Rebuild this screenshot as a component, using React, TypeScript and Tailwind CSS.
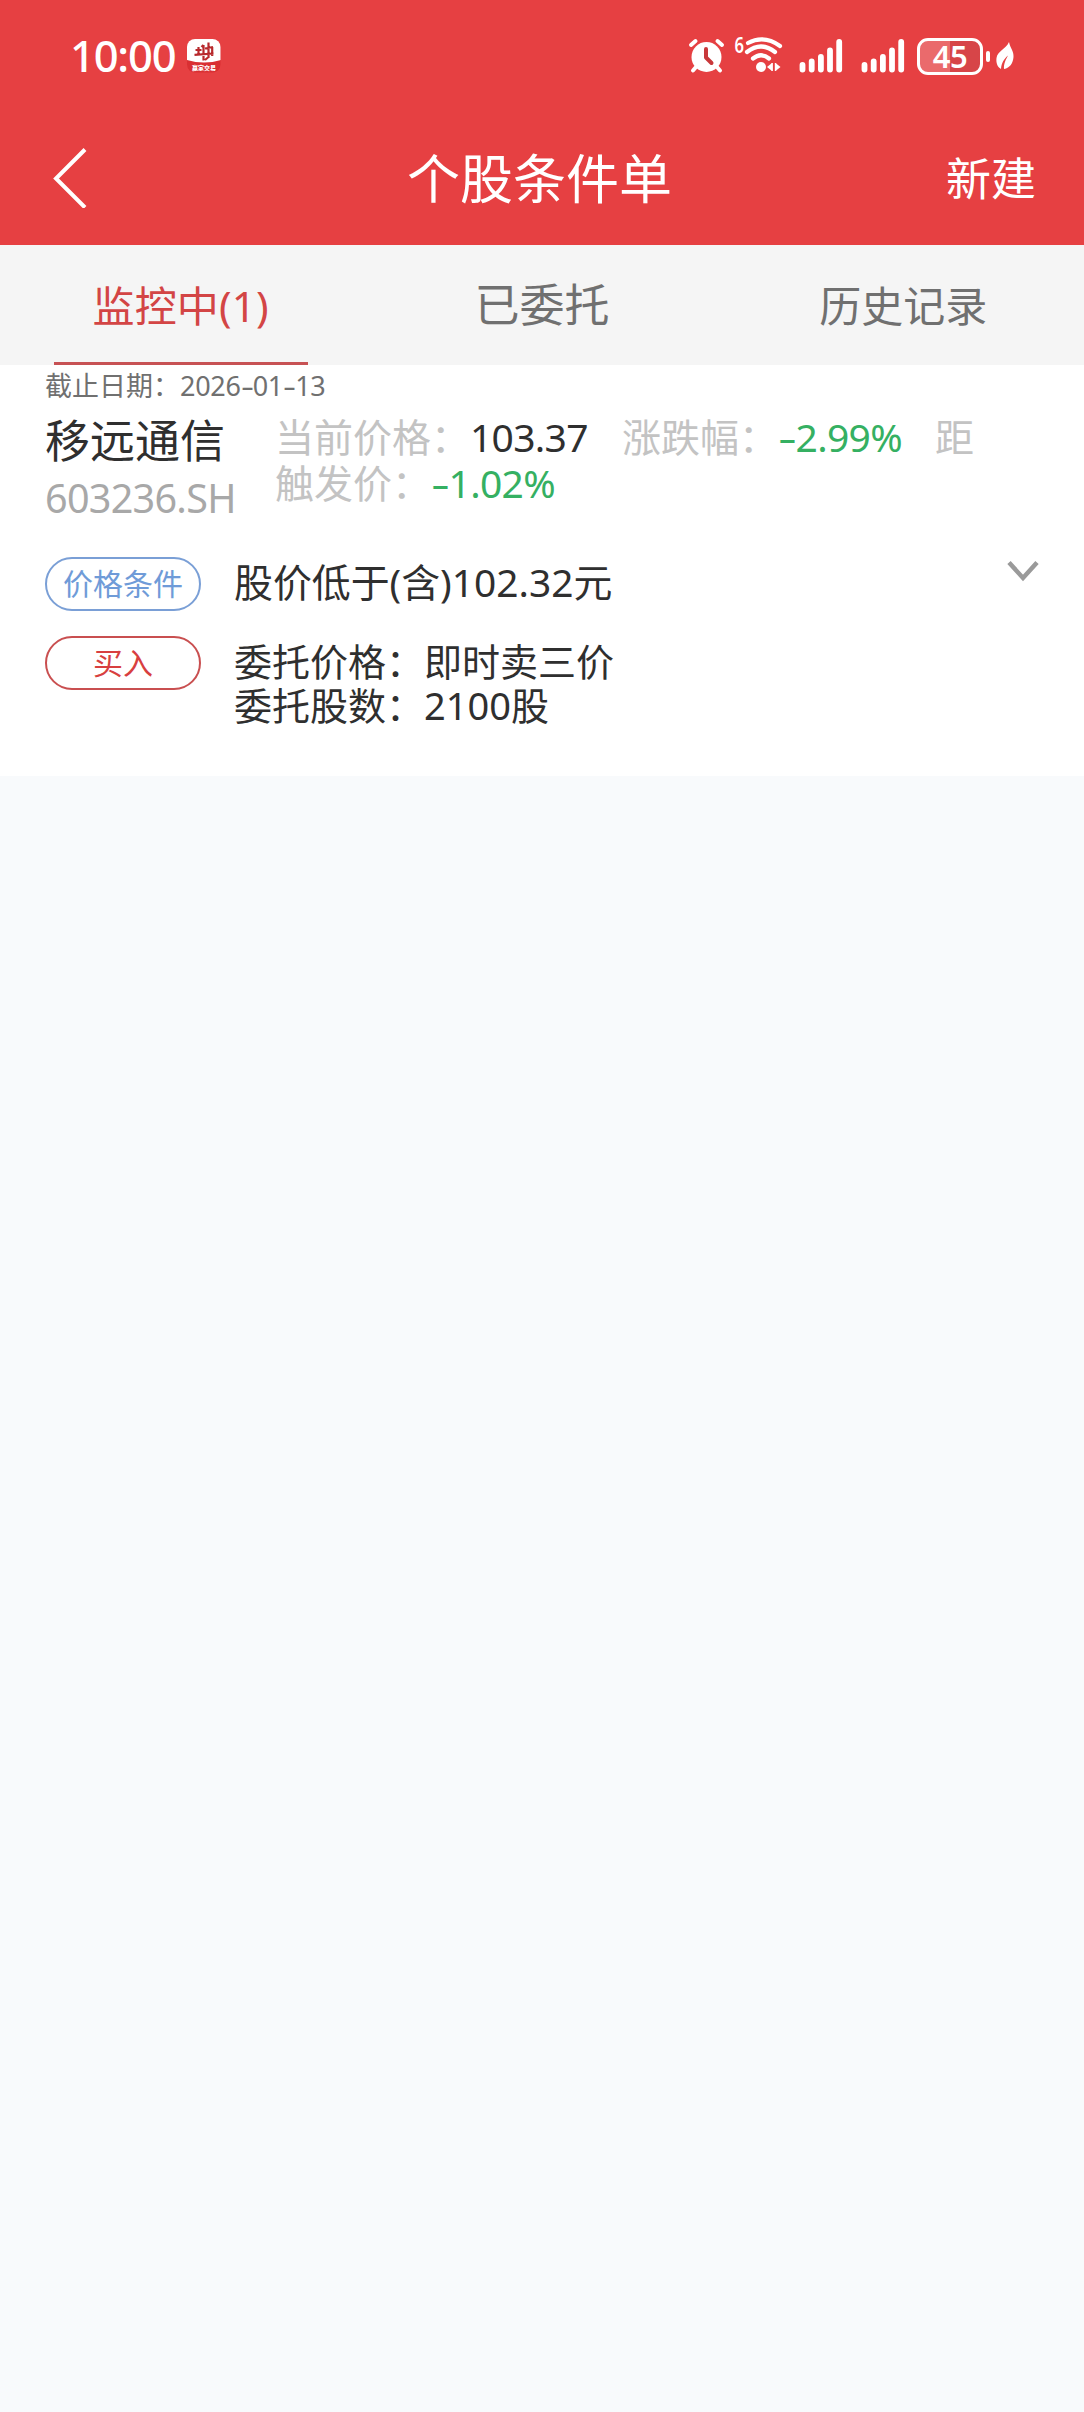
import React from "react";

const FONT = "font-['Noto_Sans','Noto_Sans_CJK_SC',sans-serif]";

function AppBadge() {
  return (
    <svg className="ml-[12px] h-[34px] w-[34px]" viewBox="0 0 34 34">
      <defs>
        <clipPath id="badge">
          <rect width="33.5" height="33.5" rx="8" />
        </clipPath>
      </defs>
      <g clipPath="url(#badge)">
        <rect width="34" height="34" fill="#d92f32" />
        <path d="M0 0H34V21Q17 26 0 21Z" fill="#fff" />
      </g>
      <g stroke="#b8292c" strokeWidth="2.2" fill="none">
        <path d="M8.500 11H14.500M7.500 15.800L26.500 14.500M11.500 8V16M16.500 6V21.500M14.500 8L16.500 6M18 9.500L26 8M21.500 3.500V19M25.200 8V17M18 21L21.500 18" />
      </g>
      <text x="17" y="31.200" textAnchor="middle" fontSize="6" fontWeight="900" fill="#fff" className="font-['Noto_Sans_CJK_SC',sans-serif]">
        赢家交易
      </text>
    </svg>
  );
}

function Alarm() {
  return (
    <svg className="h-[36px] w-[37px]" viewBox="0 0 37 36">
      <g stroke="#fff" strokeWidth="4" strokeLinecap="round">
        <path d="M3 7L7.500 3M34 7L29.500 3M8 29L5 32.500M29 29L32 32.500" />
      </g>
      <circle cx="18.500" cy="19" r="15" fill="#fff" />
      <path d="M18 11V19.500L23.500 25" stroke="#c9383b" strokeWidth="4" fill="none" strokeLinecap="round" strokeLinejoin="round" />
    </svg>
  );
}

function Wifi() {
  return (
    <svg className="ml-[9px] h-[38px] w-[50px] overflow-visible" viewBox="0 0 50 38">
      <text x="0.500" y="16" fontSize="22" fontWeight="600" fill="#fff" textLength="9.500" lengthAdjust="spacingAndGlyphs" className="font-['Noto_Sans',sans-serif]">
        6
      </text>
      <g stroke="#fff" strokeWidth="4.200" fill="none" strokeLinecap="round">
        <path d="M14 6Q30 -2.500 46 9" />
        <path d="M13 15Q27 4 41 15" />
        <path d="M19 21.500Q27 15 35 21.500" />
      </g>
      <circle cx="27" cy="30" r="5" fill="#fff" />
      <path d="M33 30L38 26V34ZM46.500 30L41.500 26V34Z" fill="#fff" />
      <path d="M38.200 26V34M41.500 26V34" stroke="#fff" strokeWidth="1.400" />
    </svg>
  );
}

function Signal() {
  return (
    <svg className="h-[36px] w-[44px]" viewBox="0 0 44 36">
      <g stroke="#fff" strokeWidth="5.800" strokeLinecap="round">
        <path d="M3.500 27V31.500M12.700 23.500V31.500M21.900 19V31.500M31 12.500V31.500M40.200 4V31.500" />
      </g>
    </svg>
  );
}

function Battery() {
  return (
    <div className="ml-[12px] flex items-center">
      <div className="flex h-[37px] w-[66px] items-center justify-center rounded-[11px] border-[3px] border-white bg-linear-to-r from-[#ea6a6c] from-50% to-[#d74548] to-50% text-[31px] leading-none font-semibold tracking-[-0.5px] text-white">
        45
      </div>
      <div className="ml-[3px] h-[11px] w-[4px] rounded-[2px] bg-white" />
      <svg className="ml-[6px] h-[28px] w-[18px]" viewBox="0 0 18 28">
        <path d="M13 0C14 6 18 9 17.500 15C17 21 14 26 8 27C7.500 22 10 17 12 13.500C8 17 5.500 21 5 27C1 25 0 20 0.500 16C1.500 9 10 7 13 0Z" fill="#fff" />
      </svg>
    </div>
  );
}

function StatusBar() {
  return (
    <div className="flex h-[112px] items-center pr-[70px] pl-[70px] text-white">
      <span className="text-[43.500px] leading-none font-medium tracking-[-1.200px]">10:00</span>
      <AppBadge />
      <div className="ml-auto flex items-center">
        <Alarm />
        <Wifi />
        <div className="ml-[15px] flex gap-[18px]">
          <Signal />
          <Signal />
        </div>
        <Battery />
      </div>
    </div>
  );
}

function Header() {
  return (
    <div className="grid h-[132px] grid-cols-3 items-center text-white">
      <svg className="ml-[52px] h-[60px] w-[36px]" viewBox="0 0 36 60">
        <path d="M33 1.500L4 30.500L33 59.500" fill="none" stroke="#fff" strokeWidth="4" />
      </svg>
      <h1 className="-ml-[5px] text-center text-[53px] leading-none whitespace-nowrap">个股条件单</h1>
      <button className="mr-[48px] justify-self-end text-[45px] leading-none">新建</button>
    </div>
  );
}

function Tabs() {
  return (
    <nav className="grid h-[120px] grid-cols-3 bg-[#f5f5f5] text-[#707070]">
      <div className="relative flex items-center justify-center text-[42px] text-[#d34545]">
        <span className="tracking-[0.200px]">监控中(1)</span>
        <div className="absolute bottom-0 left-[54px] h-[3px] w-[254px] bg-[#c75254]" />
      </div>
      <div className="flex items-center justify-center text-[45px]">已委托</div>
      <div className="flex items-center justify-center text-[42px]">历史记录</div>
    </nav>
  );
}

function Hyphen() {
  return <span className="inline-block w-[0.45em] origin-left scale-x-150">-</span>;
}

function Card() {
  return (
    <section className="h-[411px] bg-white px-[45px] text-[#2f2f2f]">
      <p className="pt-[4px] text-[27px] leading-[34px] text-[#707070]">
        截止日期：
        <span className="tracking-[-0.300px]">
          2026
          <Hyphen />
          01
          <Hyphen />
          13
        </span>
      </p>
      <div className="flex">
        <div className="w-[230px] pt-[13px]">
          <p className="text-[45px] leading-[50px]">移远通信</p>
          <p className="mt-[7px] text-[39.500px] leading-[50px] tracking-[-0.700px] text-[#a8a8a8]">603236.SH</p>
        </div>
        <div className="pt-[11px] text-[39px] leading-[46px] text-[#c3c3c3]">
          <p className="flex whitespace-pre">
            <span>当前价格：</span>
            <span className="w-[152px] tracking-[-0.700px] text-[#2f2f2f]">103.37</span>
            <span>涨跌幅：</span>
            <span className="w-[157px] tracking-[-0.700px] text-[#35b062]">
              <Hyphen />
              2.99%
            </span>
            <span>距</span>
          </p>
          <p className="flex">
            <span>触发价：</span>
            <span className="tracking-[-0.700px] text-[#35b062]">
              <Hyphen />
              1.02%
            </span>
          </p>
        </div>
      </div>
      <div className="mt-[34px] flex">
        <span className="flex h-[54px] w-[156px] items-center justify-center rounded-full border-2 border-[#7a9fd6] text-[30px] leading-none text-[#6f9bd8]">
          价格条件
        </span>
        <p className="ml-[33px] text-[38.900px] leading-[50px]">股价低于(含)102.32元</p>
        <svg className="mt-[3px] ml-auto h-[22px] w-[32px]" viewBox="0 0 32 22">
          <path d="M2 2.500L16 18L30 2.500" fill="none" stroke="#9a9a9a" strokeWidth="4.500" />
        </svg>
      </div>
      <div className="mt-[25px] flex">
        <span className="flex h-[54px] w-[156px] items-center justify-center rounded-full border-2 border-[#c94f50] text-[30px] leading-none text-[#d83f40]">
          买入
        </span>
        <div className="mt-[3px] ml-[33px] text-[38px] leading-[44px]">
          <p>委托价格：即时卖三价</p>
          <p>委托股数：2100股</p>
        </div>
      </div>
    </section>
  );
}

export default function App() {
  return (
    <div className={`h-[2412px] w-[1084px] bg-[#f8fafc] ${FONT}`}>
      <header className="h-[245px] bg-[#e64042]">
        <StatusBar />
        <Header />
      </header>
      <Tabs />
      <Card />
    </div>
  );
}
